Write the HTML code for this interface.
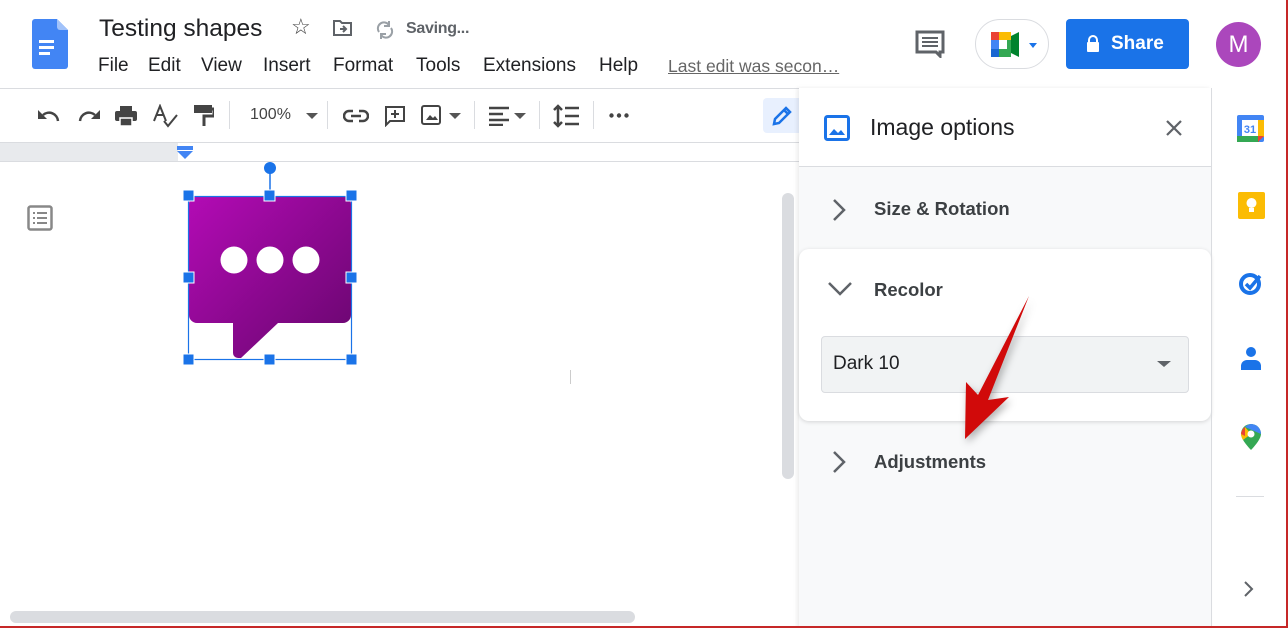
<!DOCTYPE html>
<html><head><meta charset="utf-8"><style>
*{margin:0;padding:0;box-sizing:border-box}
body{width:1288px;height:628px;overflow:hidden;background:#fff;font-family:"Liberation Sans",Arial,sans-serif;position:relative;color:#202124}
.a{position:absolute}
.m{position:absolute;top:55px;font-size:19px}
</style></head><body>
<svg class="a" style="left:32px;top:19px" width="36" height="50" viewBox="0 0 36 50"><path d="M3 0h22l11 11v36a3 3 0 0 1-3 3H3a3 3 0 0 1-3-3V3a3 3 0 0 1 3-3z" fill="#4285f4"/><path d="M25 0l11 11H28a3 3 0 0 1-3-3z" fill="#a1c2fa"/><rect x="7" y="21" width="15" height="3" fill="#fff"/><rect x="7" y="27" width="15" height="3" fill="#fff"/><rect x="7" y="33" width="11" height="3" fill="#fff"/></svg>
<div class="a" style="left:99px;top:15px;font-size:24.5px;">Testing shapes</div>
<div class="a" style="left:291px;top:14px;font-size:22px;color:#444">☆</div>
<svg class="a" style="left:332px;top:19px" width="22" height="18" viewBox="0 0 22 18"><path d="M2 2h6l2 2h9v12H2z" fill="none" stroke="#5f6368" stroke-width="2"/><path d="M8 10h6M11 7l3 3-3 3" fill="none" stroke="#5f6368" stroke-width="2"/></svg>
<svg class="a" style="left:375px;top:20px" width="20" height="20" viewBox="0 0 20 20"><path d="M4 12a6 6 0 0 1 10-7M16 8a6 6 0 0 1-10 7" fill="none" stroke="#9aa0a6" stroke-width="2"/><path d="M14 1v5h-5M6 19v-5h5" fill="none" stroke="#9aa0a6" stroke-width="2"/></svg>
<div class="a" style="left:406px;top:20px;font-size:16px;color:#5f6368;font-weight:bold;letter-spacing:-0.3px">Saving...</div>
<div class="m" style="left:98px">File</div>
<div class="m" style="left:148px">Edit</div>
<div class="m" style="left:201px">View</div>
<div class="m" style="left:263px">Insert</div>
<div class="m" style="left:333px">Format</div>
<div class="m" style="left:416px">Tools</div>
<div class="m" style="left:483px">Extensions</div>
<div class="m" style="left:599px">Help</div>
<div class="a" style="left:668px;top:56px;font-size:17.5px;color:#666;text-decoration:underline">Last edit was secon…</div>
<svg class="a" style="left:915px;top:30px" width="30" height="28" viewBox="0 0 30 28"><path d="M2 2h26v20h-3v4l-4-4H2z" fill="none" stroke="#5f6368" stroke-width="3"/><path d="M7 8h16M7 12h16M7 16h16" stroke="#5f6368" stroke-width="2"/></svg>
<div class="a" style="left:975px;top:19px;width:74px;height:50px;border:1px solid #dadce0;border-radius:25px"></div>
<svg class="a" style="left:991px;top:32px" width="48" height="25" viewBox="0 0 48 25"><rect x="0" y="0" width="8" height="8" fill="#ea4335"/><rect x="8" y="0" width="12" height="8" fill="#fbbc04"/><rect x="0" y="8" width="8" height="9" fill="#4285f4"/><rect x="0" y="17" width="8" height="8" fill="#1967d2"/><rect x="8" y="17" width="12" height="8" fill="#34a853"/><path d="M20 4l8-4v25l-8-4z" fill="#00832d"/><path d="M16 8h4v9h-4z" fill="#34a853"/><path d="M38 11h8l-4 5z" fill="#1a73e8"/></svg>
<div class="a" style="left:1066px;top:19px;width:123px;height:50px;background:#1a73e8;border-radius:4px;color:#fff;font-size:19px;font-weight:bold;line-height:50px;padding-left:45px">Share</div>
<svg class="a" style="left:1086px;top:35px" width="14" height="17" viewBox="0 0 14 17"><path d="M3 7V5a4 4 0 0 1 8 0v2" fill="none" stroke="#fff" stroke-width="2"/><rect x="1" y="7" width="12" height="10" rx="1" fill="#fff"/></svg>
<div class="a" style="left:1216px;top:22px;width:45px;height:45px;border-radius:50%;background:#ab47bc;color:#fff;font-size:24px;text-align:center;line-height:45px">M</div>
<div class="a" style="left:0;top:88px;width:1211px;height:1px;background:#dadce0"></div>
<!-- toolbar -->
<svg class="a" style="left:37px;top:107px" width="24" height="16" viewBox="0 0 24 16"><path d="M21 14a9 9 0 0 0-15-6" fill="none" stroke="#444" stroke-width="2.5"/><path d="M1 3v9h9z" fill="#444"/></svg>
<svg class="a" style="left:77px;top:107px" width="24" height="16" viewBox="0 0 24 16"><path d="M3 14a9 9 0 0 1 15-6" fill="none" stroke="#444" stroke-width="2.5"/><path d="M23 3v9h-9z" fill="#444"/></svg>
<svg class="a" style="left:115px;top:106px" width="22" height="20" viewBox="0 0 22 20"><rect x="5" y="0" width="12" height="5" fill="#444"/><rect x="0" y="5" width="22" height="10" rx="2" fill="#444"/><rect x="5" y="12" width="12" height="8" fill="#444" stroke="#fff" stroke-width="1.5"/></svg>
<svg class="a" style="left:153px;top:104px" width="26" height="24" viewBox="0 0 26 24"><path d="M1 17L7 2l6 15M3.5 11h7" fill="none" stroke="#444" stroke-width="2"/><path d="M11 17l4 5 9-11" fill="none" stroke="#444" stroke-width="2"/></svg>
<svg class="a" style="left:194px;top:105px" width="20" height="22" viewBox="0 0 20 22"><rect x="0" y="0" width="18" height="8" fill="#444"/><path d="M18 4h2v7H10v10" fill="none" stroke="#444" stroke-width="3"/></svg>
<div class="a" style="left:229px;top:101px;width:1px;height:28px;background:#dadce0"></div>
<div class="a" style="left:250px;top:106px;font-size:16px;color:#444">100%</div>
<div class="a" style="left:306px;top:113px;border:6px solid transparent;border-top:6px solid #555"></div>
<div class="a" style="left:327px;top:101px;width:1px;height:28px;background:#dadce0"></div>
<svg class="a" style="left:343px;top:108px" width="26" height="16" viewBox="0 0 26 16"><path d="M10 3H6a5 5 0 0 0 0 10h4M16 3h4a5 5 0 0 1 0 10h-4M8 8h10" fill="none" stroke="#444" stroke-width="2.5"/></svg>
<svg class="a" style="left:384px;top:105px" width="22" height="22" viewBox="0 0 22 22"><path d="M2 2h18v14H6l-4 4z" fill="none" stroke="#444" stroke-width="2"/><path d="M11 5v8M7 9h8" stroke="#444" stroke-width="2"/></svg>
<svg class="a" style="left:421px;top:105px" width="22" height="22" viewBox="0 0 22 22"><rect x="1" y="1" width="18" height="18" rx="2" fill="none" stroke="#444" stroke-width="2"/><path d="M5 15l4-5 3 3 2-2 3 4z" fill="#444"/></svg>
<div class="a" style="left:449px;top:113px;border:6px solid transparent;border-top:6px solid #555"></div>
<div class="a" style="left:474px;top:101px;width:1px;height:28px;background:#dadce0"></div>
<svg class="a" style="left:489px;top:106px" width="20" height="20" viewBox="0 0 20 20"><path d="M0 2h20M0 8h14M0 14h20M0 19h14" stroke="#444" stroke-width="2.5"/></svg>
<div class="a" style="left:514px;top:113px;border:6px solid transparent;border-top:6px solid #555"></div>
<div class="a" style="left:539px;top:101px;width:1px;height:28px;background:#dadce0"></div>
<svg class="a" style="left:553px;top:104px" width="26" height="24" viewBox="0 0 26 24"><path d="M5 2v20M1 6l4-4 4 4M1 18l4 4 4-4M12 4h14M12 12h14M12 20h14" fill="none" stroke="#444" stroke-width="2.5"/></svg>
<div class="a" style="left:593px;top:101px;width:1px;height:28px;background:#dadce0"></div>
<svg class="a" style="left:609px;top:113px" width="20" height="5" viewBox="0 0 20 5"><circle cx="2.5" cy="2.5" r="2.2" fill="#444"/><circle cx="10" cy="2.5" r="2.2" fill="#444"/><circle cx="17.5" cy="2.5" r="2.2" fill="#444"/></svg>
<div class="a" style="left:763px;top:98px;width:40px;height:35px;background:#e8f0fe;border-radius:4px"></div>
<svg class="a" style="left:771px;top:105px" width="22" height="22" viewBox="0 0 22 22"><path d="M3 19l1-5L15 3l4 4L8 18z M13 5l4 4" fill="none" stroke="#1a73e8" stroke-width="2.5"/></svg>
<!-- ruler -->
<div class="a" style="left:0;top:142px;width:799px;height:1px;background:#dadce0"></div>
<div class="a" style="left:0;top:143px;width:178px;height:18px;background:#e8eaed"></div>
<div class="a" style="left:0;top:161px;width:799px;height:1px;background:#dadce0"></div>
<div class="a" style="left:177px;top:146px;width:16px;height:4px;background:#4285f4"></div>
<div class="a" style="left:177px;top:151px;border:8px solid transparent;border-top:8px solid #4285f4;border-bottom:0"></div>
<svg class="a" style="left:27px;top:205px" width="26" height="26" viewBox="0 0 26 26"><rect x="1.5" y="1.5" width="23" height="23" rx="2" fill="none" stroke="#888" stroke-width="2.5"/><path d="M6 8h2M10 8h10M6 13h2M10 13h10M6 18h2M10 18h10" stroke="#888" stroke-width="2"/></svg>
<svg class="a" style="left:180px;top:160px" width="185" height="205" viewBox="180 160 185 205">
<defs><linearGradient id="g" x1="0" y1="0" x2="1" y2="1"><stop offset="0" stop-color="#b30bb5"/><stop offset="1" stop-color="#67066d"/></linearGradient></defs>
<path d="M197 196h146a8 8 0 0 1 8 8v111a8 8 0 0 1-8 8h-65l-37 35h-3a5 5 0 0 1-5-5v-30h-36a8 8 0 0 1-8-8V204a8 8 0 0 1 8-8z" fill="url(#g)"/>
<circle cx="234" cy="260" r="13.5" fill="#fff"/><circle cx="270" cy="260" r="13.5" fill="#fff"/><circle cx="306" cy="260" r="13.5" fill="#fff"/>
<rect x="188.5" y="196.5" width="163" height="163" fill="none" stroke="#1a73e8" stroke-width="1.2"/>
<line x1="270" y1="168" x2="270" y2="196" stroke="#1a73e8" stroke-width="1.5"/>
<circle cx="270" cy="168" r="6" fill="#1a73e8"/>
<g fill="#1a73e8" stroke="#fff" stroke-width="1"><rect x="183" y="190" width="11" height="11"/><rect x="264" y="190" width="11" height="11"/><rect x="346" y="190" width="11" height="11"/><rect x="183" y="272" width="11" height="11"/><rect x="346" y="272" width="11" height="11"/><rect x="183" y="354" width="11" height="11"/><rect x="264" y="354" width="11" height="11"/><rect x="346" y="354" width="11" height="11"/></g>
</svg>
<div class="a" style="left:570px;top:370px;width:1px;height:14px;background:#ccc"></div>
<div class="a" style="left:782px;top:193px;width:12px;height:286px;background:#dadce0;border-radius:6px"></div>
<div class="a" style="left:10px;top:611px;width:625px;height:12px;background:#dadce0;border-radius:6px"></div>
<!-- side panel -->
<div class="a" style="left:799px;top:88px;width:412px;height:540px;background:#f8f9fa;box-shadow:-2px 0 4px rgba(0,0,0,.08)"></div>
<div class="a" style="left:799px;top:88px;width:412px;height:79px;background:#fff;border-bottom:1px solid #dadce0"></div>
<svg class="a" style="left:824px;top:115px" width="26" height="26" viewBox="0 0 26 26"><rect x="1.5" y="1.5" width="23" height="23" rx="2" fill="none" stroke="#1a73e8" stroke-width="3"/><path d="M5 20l5-6 4 4 3-3 4 5z" fill="#1a73e8"/></svg>
<div class="a" style="left:870px;top:114px;font-size:23px;color:#202124">Image options</div>
<svg class="a" style="left:1165px;top:119px" width="18" height="18" viewBox="0 0 18 18"><path d="M2 2l14 14M16 2L2 16" stroke="#5f6368" stroke-width="2.2"/></svg>
<svg class="a" style="left:831px;top:198px" width="16" height="24" viewBox="0 0 16 24"><path d="M3 2l10 10L3 22" fill="none" stroke="#5f6368" stroke-width="2.5"/></svg>
<div class="a" style="left:874px;top:198px;font-size:18.5px;font-weight:bold;color:#3c4043">Size &amp; Rotation</div>
<div class="a" style="left:799px;top:249px;width:412px;height:172px;background:#fff;border-radius:10px;box-shadow:0 1px 4px rgba(0,0,0,.15)"></div>
<svg class="a" style="left:827px;top:280px" width="26" height="16" viewBox="0 0 26 16"><path d="M2 3l11 11L24 3" fill="none" stroke="#5f6368" stroke-width="2.5"/></svg>
<div class="a" style="left:874px;top:279px;font-size:18.5px;font-weight:bold;color:#3c4043">Recolor</div>
<div class="a" style="left:821px;top:336px;width:368px;height:57px;background:#f1f3f4;border:1px solid #dadce0;border-radius:4px"></div>
<div class="a" style="left:833px;top:353px;font-size:19px;color:#202124">Dark 10</div>
<div class="a" style="left:1157px;top:361px;border:7px solid transparent;border-top:6px solid #5f6368"></div>
<svg class="a" style="left:831px;top:450px" width="16" height="24" viewBox="0 0 16 24"><path d="M3 2l10 10L3 22" fill="none" stroke="#5f6368" stroke-width="2.5"/></svg>
<div class="a" style="left:874px;top:451px;font-size:18.5px;font-weight:bold;color:#3c4043">Adjustments</div>
<svg class="a" style="left:960px;top:290px;overflow:visible" width="80" height="160" viewBox="960 290 80 160"><path d="M1029 296L988 400 1009 397 965 439 966 382 978 395z" fill="#d10a0a" style="filter:drop-shadow(2px 4px 4px rgba(0,0,0,.3))"/></svg>
<!-- right sidebar -->
<div class="a" style="left:1211px;top:88px;width:1px;height:540px;background:#dadce0"></div>
<svg class="a" style="left:1237px;top:115px" width="27" height="27" viewBox="0 0 27 27"><rect x="0" y="0" width="27" height="27" rx="2" fill="#4285f4"/><rect x="21" y="5" width="6" height="17" fill="#fbbc04"/><rect x="0" y="21" width="22" height="6" fill="#34a853"/><path d="M21 21h6l-6 6z" fill="#ea4335"/><rect x="5" y="5" width="16" height="16" fill="#fff"/><text x="13" y="18" font-size="11" font-family="Liberation Sans" fill="#4285f4" text-anchor="middle" font-weight="bold">31</text></svg>
<svg class="a" style="left:1238px;top:192px" width="27" height="27" viewBox="0 0 27 27"><rect width="27" height="27" rx="2" fill="#fbbc04"/><circle cx="13.5" cy="11" r="5" fill="#fff"/><rect x="11" y="16" width="5" height="4" fill="#fff"/></svg>
<svg class="a" style="left:1238px;top:270px" width="26" height="26" viewBox="0 0 26 26"><circle cx="12" cy="14" r="9" fill="none" stroke="#1a73e8" stroke-width="4"/><path d="M8 14l4 4 10-12" fill="none" stroke="#1a73e8" stroke-width="3.5"/></svg>
<svg class="a" style="left:1240px;top:346px" width="22" height="26" viewBox="0 0 22 26"><circle cx="11" cy="6" r="5" fill="#1a73e8"/><path d="M1 24v-4a6 6 0 0 1 6-6h8a6 6 0 0 1 6 6v4z" fill="#1a73e8"/></svg>
<svg class="a" style="left:1241px;top:424px" width="20" height="26" viewBox="0 0 20 26"><path d="M10 0a10 10 0 0 1 10 10c0 6-10 16-10 16S0 16 0 10A10 10 0 0 1 10 0z" fill="#34a853"/><path d="M10 0a10 10 0 0 1 10 10L4 3A10 10 0 0 1 10 0z" fill="#4285f4"/><path d="M0 10A10 10 0 0 1 4 3l6 7-8 6C1 14 0 12 0 10z" fill="#fbbc04"/><path d="M4 3A10 10 0 0 0 0 10l4 2z" fill="#ea4335"/><circle cx="10" cy="10" r="3.5" fill="#fff"/></svg>
<div class="a" style="left:1236px;top:496px;width:28px;height:1px;background:#dadce0"></div>
<svg class="a" style="left:1243px;top:580px" width="12" height="18" viewBox="0 0 12 18"><path d="M2 2l7 7-7 7" fill="none" stroke="#5f6368" stroke-width="2"/></svg>
<div class="a" style="left:1286px;top:0;width:2px;height:628px;background:#c62828"></div>
<div class="a" style="left:0;top:626px;width:1288px;height:2px;background:#c62828"></div>
</body></html>
